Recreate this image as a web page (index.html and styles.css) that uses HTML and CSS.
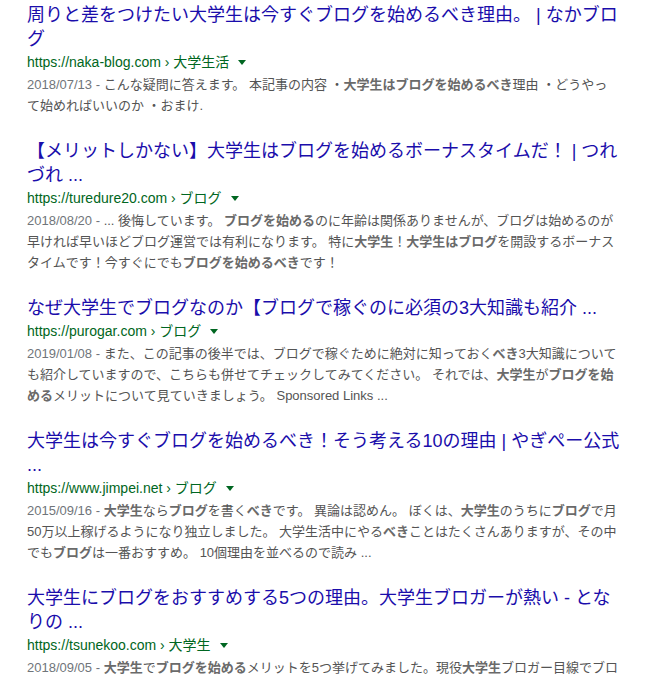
FILE: index.html
```html
<!doctype html>
<html lang="ja">
    <head>
        <meta charset="UTF-8" />
        <meta name="viewport" content="width=device-width, initial-scale=1" />

        <link rel="stylesheet" href="styles.css">

        <title>大学生 ブログ - 検索</title>
    </head>
    <body>
        <div id="results">
            <div class="result">
                <h3 class="title"><a href="#">周りと差をつけたい大学生は今すぐブログを始めるべき理由。 | なかブログ</a></h3>
                <div class="url">https://naka-blog.com › 大学生活<span class="arrow"></span></div>
                <div class="snippet"><span class="date">2018/07/13 - </span>こんな疑問に答えます。 本記事の内容 ・<b>大学生はブログを始めるべき</b>理由 ・どうやって始めればいいのか ・おまけ.</div>
            </div>
            <div class="result">
                <h3 class="title"><a href="#">【メリットしかない】大学生はブログを始めるボーナスタイムだ！ | つれづれ ...</a></h3>
                <div class="url">https://turedure20.com › ブログ<span class="arrow"></span></div>
                <div class="snippet"><span class="date">2018/08/20 - </span>... 後悔しています。 <b>ブログを始める</b>のに年齢は関係ありませんが、ブログは始めるのが早ければ早いほどブログ運営では有利になります。 特に<b>大学生</b>！<b>大学生はブログ</b>を開設するボーナスタイムです！今すぐにでも<b>ブログを始めるべき</b>です！</div>
            </div>
            <div class="result">
                <h3 class="title"><a href="#">なぜ大学生でブログなのか【ブログで稼ぐのに必須の3大知識も紹介 ...</a></h3>
                <div class="url">https://purogar.com › ブログ<span class="arrow"></span></div>
                <div class="snippet"><span class="date">2019/01/08 - </span>また、この記事の後半では、ブログで稼ぐために絶対に知っておく<b>べき</b>3大知識についても紹介していますので、こちらも併せてチェックしてみてください。 それでは、<b>大学生</b>が<b>ブログを始める</b>メリットについて見ていきましょう。 Sponsored Links ...</div>
            </div>
            <div class="result">
                <h3 class="title"><a href="#">大学生は今すぐブログを始めるべき！そう考える10の理由 | やぎぺー公式 ...</a></h3>
                <div class="url">https://www.jimpei.net › ブログ<span class="arrow"></span></div>
                <div class="snippet"><span class="date">2015/09/16 - </span><b>大学生</b>なら<b>ブログ</b>を書く<b>べき</b>です。 異論は認めん。 ぼくは、<b>大学生</b>のうちに<b>ブログ</b>で月50万以上稼げるようになり独立しました。 大学生活中にやる<b>べき</b>ことはたくさんありますが、その中でも<b>ブログ</b>は一番おすすめ。 10個理由を並べるので読み ...</div>
            </div>
            <div class="result">
                <h3 class="title"><a href="#">大学生にブログをおすすめする5つの理由。大学生ブロガーが熱い - となりの ...</a></h3>
                <div class="url">https://tsunekoo.com › 大学生<span class="arrow"></span></div>
                <div class="snippet"><span class="date">2018/09/05 - </span><b>大学生</b>で<b>ブログを始める</b>メリットを5つ挙げてみました。現役<b>大学生</b>ブロガー目線でブログを始めるメリットを紹介しています。</div>
            </div>
        </div>
    </body>
</html>
```

FILE: styles.css
```css
body {
    margin: 0;
    background-color: #ffffff;
    font-family: "Liberation Sans", "Noto Sans CJK JP", sans-serif;
}
#results {
    padding: 3px 0 0 27px;
    width: 597px;
}
.result {
    margin-bottom: 23px;
}
.title {
    margin: 0;
    font-size: 18px;
    font-weight: normal;
    line-height: 24px;
}
.title a {
    color: #1a0dab;
    text-decoration: none;
}
.url {
    font-size: 14px;
    line-height: 23px;
    color: #006621;
}
.arrow {
    display: inline-block;
    margin-left: 9px;
    vertical-align: 2px;
    border-top: 5px solid #006621;
    border-left: 4px solid transparent;
    border-right: 4px solid transparent;
}
.snippet {
    width: 592px;
    font-size: 13px;
    line-height: 21px;
    color: #545454;
}
.snippet b {
    color: #6a6a6a;
}
.date {
    color: #70757a;
}
```
